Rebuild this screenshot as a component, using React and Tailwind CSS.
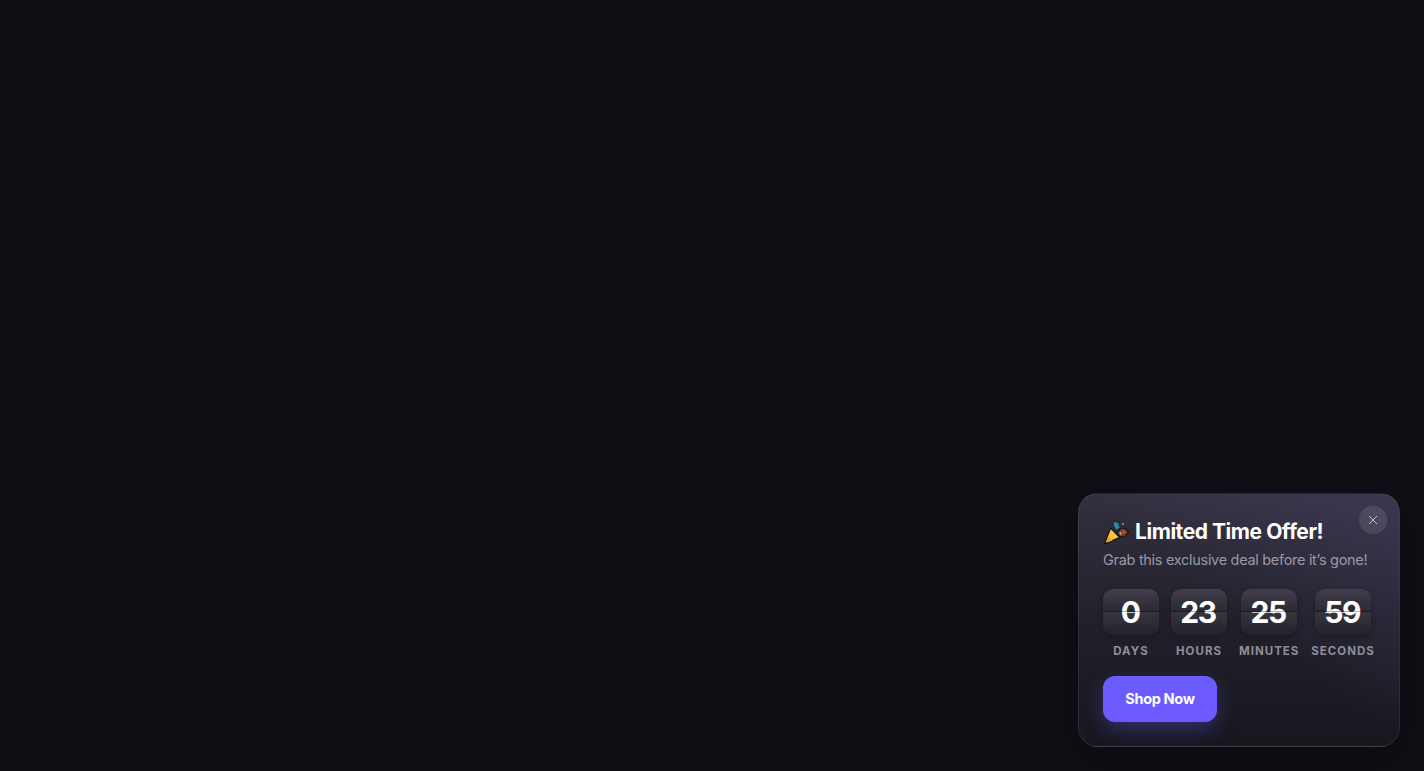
const font = { fontFamily: "Inter, 'Liberation Sans', sans-serif" };

function Popper() {
  return (
    <svg width="26" height="25" viewBox="0 0 26 25" className="shrink-0">
      <path d="M7.5 8 L17 17.5 L1.5 24 Z" fill="#f6c63e" stroke="#1b1712" strokeWidth="1.4" strokeLinejoin="round" />
      <path d="M5 16 L9.5 20.5 L4 22.5 Z" fill="#eda32f" />
      <path d="M10 4 L12 0.5 L14.5 3 L17 1.5 L16 5.5 L17.5 7.5 L13.5 10.5 L11 7 Z" fill="#2f86ad" stroke="#12262f" strokeWidth="1" strokeLinejoin="round" />
      <path d="M14 12 L18 8.5 L21.5 8 L25.5 12 L22.5 16 L17 17 Z" fill="#7a4630" stroke="#1b1210" strokeWidth="1.1" strokeLinejoin="round" />
      <circle cx="20.5" cy="12" r="1.2" fill="#d9503f" />
      <circle cx="17.5" cy="13.5" r="0.9" fill="#e8c9a0" />
      <circle cx="20" cy="4" r="1.1" fill="#7e9aa6" />
    </svg>
  );
}

function FlipDigit({ value, bar }) {
  return (
    <div className="relative h-[46px] w-14 pr-[2px] rounded-[10px] flex items-center justify-center text-[30px] leading-none font-bold tracking-[-1.5px] text-white bg-[linear-gradient(to_bottom,#423f4b_0%,#2a2831_50%,#37353e_50%,#24232a_100%)] shadow-[0_2px_6px_rgba(0,0,0,0.25)]">
      {value}
      <div className="absolute left-0 right-0 top-[22px] h-px bg-black/30" />
      {bar}
    </div>
  );
}

function Unit({ value, label, bar }) {
  return (
    <div className="flex flex-col items-center min-w-14 gap-[9px]">
      <FlipDigit value={value} bar={bar} />
      <span className="text-[11.5px] leading-[14px] font-bold tracking-[1px] text-[#8f8d9b] whitespace-nowrap">{label}</span>
    </div>
  );
}

export default function App() {
  return (
    <div style={font} className="h-screen w-full bg-[#0e1016] flex items-end justify-end p-6 overflow-hidden">
      <div className="relative w-[322px] h-[254px] rounded-[20px] border border-white/[0.08] bg-gradient-to-b from-[#33303f] via-[#22212b] to-[#17171e] px-6 pt-6 pb-6 shadow-[0_10px_40px_rgba(0,0,0,0.3)]">
        <div className="absolute inset-0 rounded-[20px] bg-gradient-to-bl from-[#4a4470]/40 via-transparent to-transparent pointer-events-none" />
        <button className="absolute top-3 right-3 w-7 h-7 rounded-full bg-white/10 flex items-center justify-center">
          <svg width="10" height="10" viewBox="0 0 10 10" stroke="#c4c3cc" strokeWidth="1" fill="none">
            <path d="M1 1 L9 9 M9 1 L1 9" />
          </svg>
        </button>
        <div className="relative flex items-center gap-[6px] h-[28px]">
          <Popper />
          <h2 className="text-[21px] font-bold tracking-[-0.45px] text-white whitespace-nowrap">Limited Time Offer!</h2>
        </div>
        <p className="relative mt-[4px] text-[14.5px] leading-5 tracking-[-0.3px] text-[#9a98a6] whitespace-nowrap">Grab this exclusive deal before it’s gone!</p>
        <div className="relative mt-[19px] flex gap-3">
          <Unit value="0" label="DAYS" bar={<div className="absolute left-[19px] top-[23px] h-px w-[17px] bg-white/70" />} />
          <Unit value="23" label="HOURS" />
          <Unit value="25" label="MINUTES" bar={<div className="absolute left-[11px] top-[23px] h-px w-[33px] bg-white/70" />} />
          <Unit value="59" label="SECONDS" bar={<div className="absolute left-[10px] top-[23px] h-px w-[35px] bg-white/70" />} />
        </div>
        <button className="relative mt-[18px] w-[114px] h-[46px] rounded-xl bg-[#6c5cff] text-white text-[14.5px] font-bold tracking-[-0.35px] shadow-[0_8px_20px_rgba(108,92,255,0.3)]">
          Shop Now
        </button>
      </div>
    </div>
  );
}
